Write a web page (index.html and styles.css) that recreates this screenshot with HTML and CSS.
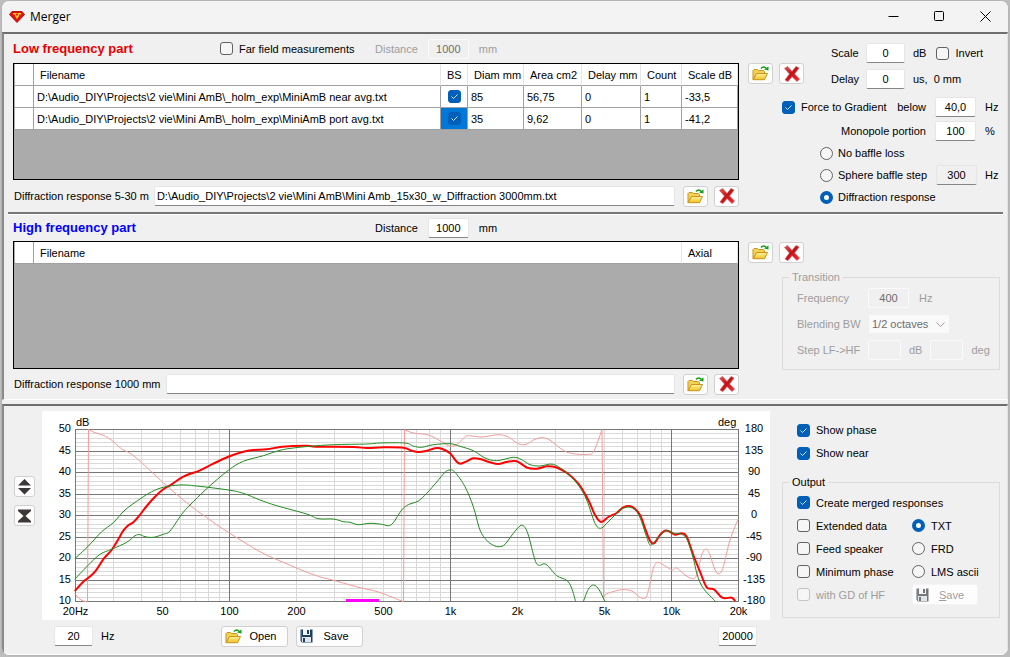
FILE: index.html
```html
<!DOCTYPE html>
<html lang="en">

<head>
    <meta charset="UTF-8">
    <meta name="viewport" content="width=device-width, initial-scale=1.0">
    <title>Merger</title>
    <link rel="stylesheet" href="styles.css">
</head>

<body>
    <svg class="sprite" aria-hidden="true">
        <defs>
            <linearGradient id="gold" x1="0" y1="0" x2="0" y2="1">
                <stop offset="0" stop-color="#fff2a0" />
                <stop offset="1" stop-color="#efc022" />
            </linearGradient>
            <linearGradient id="crimson" x1="0" y1="0" x2="1" y2="1">
                <stop offset="0" stop-color="#e0595c" />
                <stop offset="0.45" stop-color="#c01216" />
                <stop offset="1" stop-color="#ff2a30" />
            </linearGradient>
        </defs>
        <symbol id="icon-folder" viewBox="0 0 17 15">
            <path d="M1 13.500V4.500L2 3.500H5.500L6.500 4.500H11.500L12.500 5.500V8H4.500Z" fill="#f3d157" stroke="#c8961a" />
            <path d="M1.200 13.700L4.500 7.500H15.500L12.500 13.700Z" fill="url(#gold)" stroke="#c8961a" />
            <path d="M9 2.500C10.500 0.500 13 0.500 14.200 2.400" fill="none" stroke="#16a016" stroke-width="1.500" />
            <path d="M12 3.500L16.500 4.500V0.500Z" fill="#16a016" />
        </symbol>
        <symbol id="icon-delete" viewBox="0 0 16 16">
            <path d="M0.500 2.500L3.500 0.500L8 5.500L12 0.500L15 2L10.500 8L15.500 13L13 15.500L8 10.500L4 15.500L1 14L5.500 8Z" fill="url(#crimson)" stroke="#c9474a" stroke-width="0.600" />
        </symbol>
        <symbol id="icon-disk" viewBox="0 0 13 14">
            <path d="M0.500 0.500H12.500V13.500H2L0.500 12Z" fill="currentColor" />
            <path d="M3 0H10V6H3Z" fill="#f4f6f8" />
            <path d="M7 1H9V5H7Z" fill="currentColor" />
            <path d="M2 8H11V13H2Z" fill="#dfe5ea" />
            <path d="M3 9H5V13H3Z" fill="currentColor" />
            <path d="M1 1V12" stroke="#8fb0cc" stroke-width="0.600" />
        </symbol>
    </svg>

    <div class="window">
        <header class="titlebar">
            <svg class="app-icon" viewBox="0 0 16 12" aria-hidden="true">
                <path d="M3 0.500H13L15.500 3.500L8 11.500L0.500 3.500Z" fill="#e31010" stroke="#b80f0f" />
                <path d="M4 2H12V3.500H10V5L8 8L6 5V3.500H4Z" fill="#ffd81a" />
                <path d="M6.500 2.500H9.500L8 5.500Z" fill="#e31010" />
            </svg>
            <h1>Merger</h1>
            <div class="window-buttons">
                <button type="button" aria-label="Minimize"><svg viewBox="0 0 11 11"><path d="M0.500 5.500H10.500" /></svg></button>
                <button type="button" aria-label="Maximize"><svg viewBox="0 0 11 11"><rect x="0.500" y="0.500" width="9" height="9" rx="1" /></svg></button>
                <button type="button" aria-label="Close"><svg viewBox="0 0 11 11"><path d="M0.500 0.500L10.500 10.500M10.500 0.500L0.500 10.500" /></svg></button>
            </div>
        </header>

        <main>
            <div class="panel">
                <!-- Low frequency -->
                <section class="part low">
                    <div class="files">
                        <div class="part-head">
                            <h2>Low frequency part</h2>
                            <label class="check"><input type="checkbox">Far field measurements</label>
                            <div class="distance disabled">
                                <label for="lfDistance">Distance</label>
                                <input class="num" type="text" id="lfDistance" value="1000" disabled>
                                <span>mm</span>
                            </div>
                        </div>
                        <div class="grid-box">
                            <table>
                                <colgroup>
                                    <col class="c-mark"><col><col class="c-bs"><col class="c-diam"><col class="c-area"><col class="c-delay"><col class="c-count"><col class="c-scale">
                                </colgroup>
                                <thead>
                                    <tr><th></th><th>Filename</th><th>BS</th><th>Diam mm</th><th>Area cm2</th><th>Delay mm</th><th>Count</th><th>Scale dB</th></tr>
                                </thead>
                                <tbody>
                                    <tr>
                                        <td></td>
                                        <td>D:\Audio_DIY\Projects\2 vie\Mini AmB\_holm_exp\MiniAmB near avg.txt</td>
                                        <td class="bs"><input type="checkbox" aria-label="BS near" checked></td>
                                        <td>85</td><td>56,75</td><td>0</td><td>1</td><td>-33,5</td>
                                    </tr>
                                    <tr>
                                        <td></td>
                                        <td>D:\Audio_DIY\Projects\2 vie\Mini AmB\_holm_exp\MiniAmB port avg.txt</td>
                                        <td class="bs selected"><input type="checkbox" aria-label="BS port" checked></td>
                                        <td>35</td><td>9,62</td><td>0</td><td>1</td><td>-41,2</td>
                                    </tr>
                                </tbody>
                            </table>
                        </div>
                        <div class="diffraction">
                            <label for="lfDiffraction">Diffraction response 5-30 m</label>
                            <input type="text" id="lfDiffraction" value="D:\Audio_DIY\Projects\2 vie\Mini AmB\Mini Amb_15x30_w_Diffraction 3000mm.txt">
                            <div class="icon-buttons">
                                <button type="button" aria-label="Open"><svg class="folder"><use href="#icon-folder" /></svg></button>
                                <button type="button" aria-label="Delete"><svg class="delete"><use href="#icon-delete" /></svg></button>
                            </div>
                        </div>
                    </div>

                    <div class="options">
                        <div class="options-top">
                            <div class="icon-buttons">
                                <button type="button" aria-label="Open"><svg class="folder"><use href="#icon-folder" /></svg></button>
                                <button type="button" aria-label="Delete"><svg class="delete"><use href="#icon-delete" /></svg></button>
                            </div>
                            <div class="scale-grid">
                                <label for="scale">Scale</label>
                                <input class="num small" type="text" id="scale" value="0">
                                <div class="units"><span>dB</span><label class="check"><input type="checkbox">Invert</label></div>
                                <label for="delay">Delay</label>
                                <input class="num small" type="text" id="delay" value="0">
                                <div class="units delay"><span>us,</span><span>0 mm</span></div>
                            </div>
                        </div>
                        <div class="option-row force">
                            <label class="check"><input type="checkbox" checked>Force to Gradient</label>
                            <label class="end" for="below">below</label>
                            <input class="num" type="text" id="below" value="40,0">
                            <span class="unit">Hz</span>
                        </div>
                        <div class="option-row">
                            <label class="end" for="monopole">Monopole portion</label>
                            <input class="num" type="text" id="monopole" value="100">
                            <span class="unit">%</span>
                        </div>
                        <div class="option-row baffle">
                            <label class="check"><input type="radio" name="baffle">No baffle loss</label>
                        </div>
                        <div class="option-row baffle">
                            <label class="check"><input type="radio" name="baffle">Sphere baffle step</label>
                            <input class="num end readonly" type="text" aria-label="Baffle step frequency" value="300" readonly>
                            <span class="unit">Hz</span>
                        </div>
                        <div class="option-row baffle">
                            <label class="check"><input type="radio" name="baffle" checked>Diffraction response</label>
                        </div>
                    </div>
                </section>

                <hr>

                <!-- High frequency -->
                <section class="part high">
                    <div class="files">
                        <div class="part-head">
                            <h2>High frequency part</h2>
                            <div class="distance">
                                <label for="hfDistance">Distance</label>
                                <input class="num" type="text" id="hfDistance" value="1000">
                                <span>mm</span>
                            </div>
                        </div>
                        <div class="grid-box">
                            <table>
                                <colgroup>
                                    <col class="c-mark"><col><col class="c-scale">
                                </colgroup>
                                <thead>
                                    <tr><th></th><th>Filename</th><th>Axial</th></tr>
                                </thead>
                            </table>
                        </div>
                        <div class="diffraction">
                            <label for="hfDiffraction">Diffraction response 1000 mm</label>
                            <input type="text" id="hfDiffraction">
                            <div class="icon-buttons">
                                <button type="button" aria-label="Open"><svg class="folder"><use href="#icon-folder" /></svg></button>
                                <button type="button" aria-label="Delete"><svg class="delete"><use href="#icon-delete" /></svg></button>
                            </div>
                        </div>
                    </div>

                    <div class="options">
                        <div class="icon-buttons">
                            <button type="button" aria-label="Open"><svg class="folder"><use href="#icon-folder" /></svg></button>
                            <button type="button" aria-label="Delete"><svg class="delete"><use href="#icon-delete" /></svg></button>
                        </div>
                        <fieldset class="transition" disabled>
                            <legend>Transition</legend>
                            <div class="fields">
                                <label for="frequency">Frequency</label>
                                <div class="units"><input class="num" type="text" id="frequency" value="400"><span>Hz</span></div>
                                <label for="blending">Blending BW</label>
                                <div class="units">
                                    <select id="blending"><option>1/2 octaves</option></select>
                                </div>
                                <label for="stepDb">Step LF-&gt;HF</label>
                                <div class="units step">
                                    <input class="num tiny" type="text" id="stepDb"><span>dB</span>
                                    <input class="num tiny" type="text" aria-label="Step phase"><span>deg</span>
                                </div>
                            </div>
                        </fieldset>
                    </div>
                </section>
            </div>

            <!-- Chart and output -->
            <div class="panel response">
                <div class="zoom-buttons">
                    <button type="button" aria-label="Expand range"><svg viewBox="0 0 13 16"><path d="M6.500 0L13 6.500H0ZM0 9H13L6.500 15.500Z" /></svg></button>
                    <button type="button" aria-label="Shrink range"><svg viewBox="0 0 13 16"><path d="M0 1.500H13V3L7.500 8L13 13V14.500H0V13L5.500 8L0 3Z" /></svg></button>
                </div>
                <div class="chart-column">
                    <svg id="chart" class="chart" viewBox="42 411 728 209" role="img" aria-label="Frequency response"></svg>
                    <div class="chart-footer">
                        <div class="range">
                            <input class="num small" type="text" id="fmin" value="20">
                            <label for="fmin">Hz</label>
                        </div>
                        <button type="button" class="text-button"><svg class="folder"><use href="#icon-folder" /></svg><span>Open</span></button>
                        <button type="button" class="text-button"><svg class="disk"><use href="#icon-disk" /></svg><span>Save</span></button>
                        <input class="num small end" type="text" aria-label="Maximum frequency" value="20000">
                    </div>
                </div>
                <div class="output-column">
                    <div class="show">
                        <label class="check"><input type="checkbox" checked>Show phase</label>
                        <label class="check"><input type="checkbox" checked>Show near</label>
                    </div>
                    <fieldset class="output">
                        <legend>Output</legend>
                        <div class="output-grid">
                            <label class="check wide"><input type="checkbox" checked>Create merged responses</label>
                            <label class="check"><input type="checkbox">Extended data</label>
                            <label class="check"><input type="radio" name="format" checked>TXT</label>
                            <label class="check"><input type="checkbox">Feed speaker</label>
                            <label class="check"><input type="radio" name="format">FRD</label>
                            <label class="check"><input type="checkbox">Minimum phase</label>
                            <label class="check"><input type="radio" name="format">LMS ascii</label>
                            <label class="check disabled"><input type="checkbox" disabled>with GD of HF</label>
                            <button type="button" class="text-button" disabled><svg class="disk"><use href="#icon-disk" /></svg><span><u>S</u>ave</span></button>
                        </div>
                    </fieldset>
                </div>
            </div>
        </main>
    </div>

    <script src="chart.js"></script>
</body>

</html>
```
FILE: styles.css
```css
/* General Styles */
* {
    box-sizing: border-box;
}

body {
    margin: 0;
    padding: 0 1px 1px;
    min-height: 100vh;
    display: flex;
    background-color: #bdbdbd;
    font-family: "Liberation Sans", Arial, sans-serif;
    font-size: 11px;
    line-height: 14px;
    color: #000;
}

h1,
h2 {
    margin: 0;
}

input,
select,
button {
    font: inherit;
    color: inherit;
    margin: 0;
}

label,
span,
th,
td {
    white-space: nowrap;
}

.sprite {
    position: absolute;
    width: 0;
    height: 0;
}

.window {
    flex: 1;
    min-width: 0;
    display: flex;
    flex-direction: column;
    border: 1px solid #b4b4b4;
    border-radius: 8px;
    background-color: #f0f0f0;
    overflow: hidden;
}

main {
    flex: 1;
    display: flex;
    flex-direction: column;
    gap: 4px;
}

/* Title Bar */
.titlebar {
    display: flex;
    align-items: center;
    height: 31px;
    padding-left: 7px;
    background-color: #f3f3f3;
}

.app-icon {
    width: 16px;
    height: 12px;
}

.titlebar h1 {
    margin-left: 5px;
    font-family: "Open Sans", sans-serif;
    font-size: 12px;
    font-weight: normal;
}

.window-buttons {
    display: flex;
    margin-left: auto;
}

.window-buttons button {
    width: 46px;
    height: 30px;
    padding: 0;
    border: none;
    background: none;
}

.window-buttons svg {
    display: block;
    width: 11px;
    height: 11px;
    margin: 0 auto;
    fill: none;
    stroke: #000;
}

/* Panels */
.panel {
    border-top: 2px solid #6e6e6e;
    border-left: 2px solid #8a8a8a;
    border-right: 1px solid #e3e3e3;
    border-bottom: 1px solid #fff;
}

.part {
    display: grid;
    grid-template-columns: minmax(0, 1fr) 252px;
    column-gap: 9px;
    padding: 0 7px 0 9px;
}

hr {
    height: 3px;
    margin: 0 4px;
    border: none;
    border-top: 2px solid #777;
    background-color: #fff;
}

.part-head {
    display: grid;
    grid-template-columns: 207px 155px auto;
    align-items: center;
    height: 29px;
}

.high .part-head {
    height: 26px;
}

.part-head h2 {
    font-size: 13px;
    line-height: 16px;
    color: #e60000;
}

.high h2 {
    color: #0000ff;
}

.distance {
    grid-column: 3;
    display: flex;
    align-items: center;
    gap: 10px;
}

.disabled,
fieldset:disabled {
    color: #9d9d9d;
}

/* Form controls */
input[type="text"] {
    height: 20px;
    padding: 0 2px;
    border: 1px solid #e6e6e6;
    border-bottom-color: #868686;
    border-radius: 2px;
    background-color: #fff;
}

input.num {
    width: 41px;
    padding: 0;
    text-align: center;
}

input.small {
    width: 39px;
}

input.tiny {
    width: 33px;
}

input.readonly {
    background-color: #f0f0f0;
}

input[type="text"]:disabled {
    border-color: #fafafa;
    background-color: #f0f0f0;
    color: #6d6d6d;
}

select {
    width: 82px;
    height: 20px;
    padding: 0 3px;
    border: 1px solid #f0f0f0;
    appearance: none;
    background: #f9f9f9 url("data:image/svg+xml,%3Csvg xmlns='http://www.w3.org/2000/svg' width='9' height='5'%3E%3Cpath d='M0.500 0.500L4.500 4.500L8.500 0.500' fill='none' stroke='%23a0a0a0'/%3E%3C/svg%3E") no-repeat right 4px center;
}

select:disabled {
    color: #6d6d6d;
    opacity: 1;
}

.check {
    display: flex;
    align-items: center;
    gap: 6px;
}

input[type="checkbox"],
input[type="radio"] {
    flex: none;
    width: 13px;
    height: 13px;
    border: 1px solid #626262;
    border-radius: 3px;
    appearance: none;
    background-color: #f6f6f6;
}

input[type="radio"] {
    border-radius: 50%;
}

input[type="checkbox"]:checked {
    border-color: #005fb8;
    background: #005fb8 url("data:image/svg+xml,%3Csvg xmlns='http://www.w3.org/2000/svg' width='9' height='7'%3E%3Cpath d='M1.500 3.500L3.500 5.500L7.500 1.500' fill='none' stroke='%23d5e5f4'/%3E%3C/svg%3E") no-repeat center;
}

input[type="radio"]:checked {
    border: 4px solid #005fb8;
    background-color: #fff;
}

input[type="checkbox"]:disabled {
    border-color: #c4c4c4;
}

.end {
    margin-left: auto;
}

.icon-buttons {
    display: flex;
    gap: 6px;
}

.icon-buttons button,
.zoom-buttons button,
.text-button {
    display: flex;
    align-items: center;
    justify-content: center;
    width: 25px;
    height: 21px;
    padding: 0;
    border: 1px solid #d0d0d0;
    border-radius: 3px;
    background-color: #fdfdfd;
}

.folder {
    width: 17px;
    height: 15px;
}

.delete {
    width: 16px;
    height: 16px;
}

.disk {
    width: 13px;
    height: 14px;
    color: #1d425f;
}

/* File grids */
.grid-box {
    height: 117px;
    padding-left: 1px;
    border: 1px solid #000;
    background-color: #ababab;
}

.high .grid-box {
    height: 128px;
}

table {
    width: 100%;
    table-layout: fixed;
    border-spacing: 0;
    background-color: #fff;
}

th,
td {
    height: 22px;
    padding: 0 3px;
    border-right: 1px solid #a0a0a0;
    border-bottom: 1px solid #a0a0a0;
    font-weight: normal;
    text-align: left;
    overflow: hidden;
}

th {
    padding: 0 0 0 6px;
    border-right-color: #e5e5e5;
}

th:first-child {
    border-right-color: #a0a0a0;
}

.bs {
    padding: 0;
    text-align: center;
}

.bs input {
    display: block;
    margin: 0 auto;
}

.selected {
    background-color: #0078d7;
}

.c-mark {
    width: 19px;
}

.c-bs {
    width: 27px;
}

.c-diam {
    width: 56px;
}

.c-area {
    width: 58px;
}

.c-delay {
    width: 59px;
}

.c-count {
    width: 41px;
}

.c-scale {
    width: 56px;
}

.diffraction {
    display: flex;
    align-items: center;
    height: 32px;
    padding-left: 1px;
}

.high .diffraction {
    height: 30px;
}

.diffraction input {
    flex: 1;
    min-width: 0;
    margin: 0 8px 0 5px;
}

/* Low frequency options */
.options-top {
    display: flex;
    justify-content: space-between;
    padding-top: 9px;
}

.options-top .icon-buttons {
    margin-top: 20px;
}

.scale-grid {
    display: grid;
    grid-template-columns: 27px 39px 87px;
    column-gap: 8px;
    row-gap: 6px;
    align-items: center;
}

.units {
    display: flex;
    align-items: center;
    gap: 10px;
}

.delay {
    gap: 6px;
}

.option-row {
    display: flex;
    align-items: center;
    gap: 9px;
    height: 22px;
}

.option-row.force {
    margin: 7px 0 2px;
    padding-left: 34px;
}

.option-row.baffle {
    gap: 8px;
    padding-left: 72px;
}

.baffle .check {
    gap: 5px;
}

.unit {
    width: 15px;
}

/* Group boxes */
fieldset {
    min-width: 0;
    margin: 0 0 0 34px;
    padding: 0;
    border: 1px solid #dcdcdc;
}

legend {
    margin-left: 6px;
    padding: 0 3px;
}

.high .options > .icon-buttons {
    padding-top: 27px;
}

.transition {
    height: 100px;
    margin-top: 7px;
}

.fields {
    display: grid;
    grid-template-columns: 64px auto;
    column-gap: 7px;
    row-gap: 6px;
    align-items: center;
    padding: 4px 0 0 14px;
}

.step {
    gap: 8px;
}

/* Response chart */
.response {
    flex: 1;
    display: grid;
    grid-template-columns: 38px minmax(0, 1fr) 237px;
}

.zoom-buttons {
    display: flex;
    flex-direction: column;
    gap: 8px;
    padding: 70px 0 0 10px;
}

.zoom-buttons button {
    width: 21px;
}

.zoom-buttons svg {
    width: 13px;
    height: 16px;
    fill: #3c3838;
}

.chart-column {
    padding-top: 5px;
}

.chart {
    display: block;
    width: 100%;
    background-color: #fff;
}

.chart text {
    font-size: 11px;
}

.grid-minor {
    fill: none;
    stroke: #dadada;
    shape-rendering: crispEdges;
}

.grid-major {
    fill: none;
    stroke: #777;
    shape-rendering: crispEdges;
}

.curve {
    fill: none;
    stroke-linejoin: round;
}

.phase {
    stroke: #f59a9a;
}

.near {
    stroke: #218a21;
}

.merged {
    stroke: #ff0000;
    stroke-width: 2;
}

.blend {
    fill: #ff00ff;
}

.chart-footer {
    display: flex;
    align-items: center;
    gap: 8px;
    height: 32px;
    padding: 0 13px 0 12px;
}

.range {
    display: flex;
    align-items: center;
    gap: 8px;
    width: 159px;
}

.text-button {
    justify-content: flex-start;
    width: 67px;
    padding: 0 3px;
}

.text-button span {
    flex: 1;
    text-align: center;
}

.text-button:disabled {
    width: 66px;
    border-color: #f4f4f4;
    color: #9d9d9d;
}

.text-button:disabled .disk {
    color: #777;
}

/* Output options */
.output-column {
    padding: 12px 7px 0 12px;
}

.show {
    display: grid;
    row-gap: 9px;
    padding: 5px 0 0 15px;
}

.output {
    height: 143px;
    margin: 15px 0 0;
}

.output-grid {
    display: grid;
    grid-template-columns: 115px auto;
    grid-auto-rows: 23px;
    align-items: center;
    padding: 2px 0 0 14px;
}

.wide {
    grid-column: 1 / 3;
}
```
FILE: chart.js
```javascript
const chart = document.getElementById("chart");
const LEFT = 75, RIGHT = 738, TOP = 430, BOTTOM = 602;

function add(tag, attrs, text) {
    const el = document.createElementNS("http://www.w3.org/2000/svg", tag);
    for (const key in attrs) el.setAttribute(key, attrs[key]);
    if (text !== undefined) el.textContent = text;
    chart.appendChild(el);
}

function xOf(f) {
    return Math.round(LEFT - 0.5 + (RIGHT - LEFT) / 3 * Math.log10(f / 20)) + 0.5;
}

function yOf(db) {
    return Math.round(BOTTOM - (db - 10) * (BOTTOM - TOP) / 40) - 0.5;
}

// Grid: one line per dB and per decade step
let minor = "", major = "";
for (let db = 10; db <= 50; db++) {
    const line = `M${LEFT} ${yOf(db)}H${RIGHT}`;
    if (db % 5) minor += line; else major += line;
}
for (let decade = 10; decade <= 10000; decade *= 10) {
    for (let n = 1; n < 10; n++) {
        const f = n * decade;
        if (f < 20 || f > 20000) continue;
        const line = `M${xOf(f)} ${TOP - 1}V${BOTTOM}`;
        if (n === 1 || f === 20 || f === 20000) major += line; else minor += line;
    }
}
add("path", { class: "grid-minor", d: minor });
add("path", { class: "grid-major", d: major });

// Axis labels
for (let i = 0; i <= 8; i++) {
    const y = yOf(50 - i * 5) + 2.5;
    add("text", { x: 71, y: y, "text-anchor": "end" }, 50 - i * 5);
    add("text", { x: 754, y: y, "text-anchor": "middle" }, 180 - i * 45);
}
add("text", { x: 76, y: 426 }, "dB");
add("text", { x: 718, y: 426 }, "deg");
[[20, "20Hz"], [50, "50"], [100, "100"], [200, "200"], [500, "500"], [1000, "1k"], [2000, "2k"], [5000, "5k"], [10000, "10k"], [20000, "20k"]]
    .forEach(([f, label]) => add("text", { x: xOf(f), y: 615, "text-anchor": "middle" }, label));

add("rect", { class: "blend", x: 346, y: 599, width: 33, height: 3 });

// Smooth line through the points
function smooth(p) {
    let d = `M${p[0]} ${p[1]}`;
    const n = p.length / 2;
    const at = i => {
        i = Math.max(0, Math.min(n - 1, i));
        return [p[i * 2], p[i * 2 + 1]];
    };
    for (let i = 0; i < n - 1; i++) {
        const [a, b, c, e] = [at(i - 1), at(i), at(i + 1), at(i + 2)];
        d += `C${b[0] + (c[0] - a[0]) / 6} ${b[1] + (c[1] - a[1]) / 6} ${c[0] - (e[0] - b[0]) / 6} ${c[1] - (e[1] - b[1]) / 6} ${c[0]} ${c[1]}`;
    }
    return d;
}

const phase = [
    [74.7, 593.3, 80, 599.3, 86, 601.7, 87.5, 601.7],
    [88.5, 429.5, 95, 432.7, 103.3, 435.3, 111.7, 440.3, 121.7, 449, 130, 453.3, 140, 461.3, 166.7, 485.7, 186.7, 502.7, 206.7, 517.7, 228.3, 532.3, 260, 551.7, 283.3, 562.3, 313.3, 574.7, 335, 580.7, 360, 587.7, 378.3, 592, 403.5, 601.7],
    [404.5, 429.7, 413.3, 433, 428.3, 435, 441.7, 441.7, 450, 446.3, 457.3, 444.3, 463.3, 438.3, 468.3, 435.7, 481.7, 437, 498.3, 434.7, 508.3, 437, 518.3, 443.7, 526, 444.3, 535, 439.3, 542.7, 437.7, 550, 440.3, 563.3, 450.3, 573.3, 453.7, 588.3, 454.3, 594, 451, 602, 429.7],
    [603.5, 598, 606, 594.3, 611.7, 592, 621.7, 589.7, 631.7, 591, 640, 597.3, 645.7, 597.7, 649.3, 586.7, 653.3, 568.3, 657.7, 562.3, 665, 566, 672.3, 570, 676.7, 568, 685, 575, 692.7, 578.7, 696.7, 575, 701.7, 555, 706, 549, 710, 555, 715, 570, 719, 573.7, 723.3, 566.7, 730, 540, 738, 519.3]
];

const near = [
    [74.7, 558.7, 87.7, 546.7, 101.7, 531.7, 113.3, 522.7, 125, 510, 140, 499, 151.7, 491.7, 163.3, 487.3, 180, 485, 196.7, 486, 228.3, 490, 243.3, 493.3, 260, 500, 276.7, 505.7, 306.7, 514, 318.3, 518.7, 333.3, 519, 343.3, 521.7, 350, 522.3, 358.3, 524.7, 370, 523.3, 381.7, 524.3, 388.3, 525.7, 393.3, 522.7, 401.7, 510, 408.3, 504.7, 418.3, 501, 426.7, 493.3, 436.7, 482, 445, 472.3, 450, 470, 455, 472.3, 465, 486.7, 473.3, 506.7, 480, 530, 486.7, 540.3, 493.3, 545.3, 499.3, 546.7, 505, 544.3, 513.3, 533.3, 520, 526, 524, 526.3, 528.3, 535, 535, 560, 539, 565.3, 546, 564.3, 556.7, 575.7, 566.7, 580.3, 571.7, 588.3, 575.7, 601.7],
    [583.3, 601.7, 588.3, 589.3, 593.7, 585, 599.3, 590, 604.7, 601.3],
    [74.7, 579.3, 87.7, 565.7, 100, 554.3, 111.7, 549.3, 126.7, 542.3, 135, 535.7, 140, 534.7, 145, 536.7, 153.3, 537.3, 163.3, 534.3, 170, 531, 181.7, 514.3, 190, 505, 206.7, 488.7, 228.3, 470.3, 243.3, 461.3, 263.3, 455.7, 280, 450.3, 293.3, 448, 310, 446.3, 333.3, 444.7, 366.7, 444, 380, 443, 405, 443, 413.3, 446, 421.7, 447.3, 433.3, 444.7, 450, 443.7, 460, 446.3, 473.3, 450.7, 485, 458, 496.7, 460.7, 513.3, 457.3, 521.7, 459.7, 530, 464.7, 540, 466, 553.3, 464.3, 566.7, 473, 578.3, 485, 586.7, 500, 595, 523.3, 600.7, 528.3, 606.7, 523.3, 616.7, 513.3, 623.3, 508.3, 631.7, 507.7, 639.3, 516, 648.3, 541.7, 651.7, 544.7, 658.3, 537.3, 666, 530.7, 673.3, 533, 681.7, 534.3, 687.3, 540, 693.3, 558.3, 697.3, 575, 703.3, 588.3, 715.7, 601.7]
];

const merged = [74.7, 591, 83.3, 581.7, 87.7, 578.3, 95, 571.7, 104, 558.3, 111.7, 550, 118.3, 539.3, 123.3, 530.7, 128.3, 525.3, 133.3, 522.3, 139.3, 515.7, 146.7, 506, 155, 496.7, 163.3, 489.3, 171.7, 484.3, 183.3, 476.7, 200, 470.3, 213.3, 463.7, 228.3, 456.7, 243.3, 451.7, 253.3, 450, 266.7, 449.3, 280, 447, 293.3, 446, 306.7, 445.7, 316.7, 446.7, 353.3, 447, 366.7, 448, 383.3, 447.3, 403.3, 447.7, 411.7, 450.7, 419, 452, 426.7, 450.7, 435, 448.3, 441.7, 448.7, 450, 453.3, 456.7, 461.7, 460.7, 463.7, 466.7, 461.3, 473.3, 458.3, 480, 459, 490, 462.3, 498.3, 464, 506.7, 462, 516.7, 461.3, 527.3, 467.7, 536.7, 468.7, 546.7, 466.3, 555, 467, 566.7, 472.7, 578.3, 483.7, 588.3, 500, 595, 515, 601, 522, 608.3, 517, 616.7, 513, 623.3, 507.3, 631.7, 506.7, 640, 515, 645, 528.3, 650, 540.7, 654, 543.3, 660, 535, 665, 530.7, 670, 531.7, 675, 534.7, 681.7, 533.3, 686.7, 536.7, 693.3, 555, 700, 571.7, 706.7, 587.3, 714, 589.3, 722.3, 597.7, 731.7, 597.7, 735.3, 601.3];

// The phase segments are joined by the vertical wrap at +-180 degrees
add("path", { class: "curve phase", d: phase.map(smooth).join("").replace(/(?!^)M/g, "L") });
add("path", { class: "curve merged", d: smooth(merged) });
near.forEach(points => add("path", { class: "curve near", d: smooth(points) }));
```
